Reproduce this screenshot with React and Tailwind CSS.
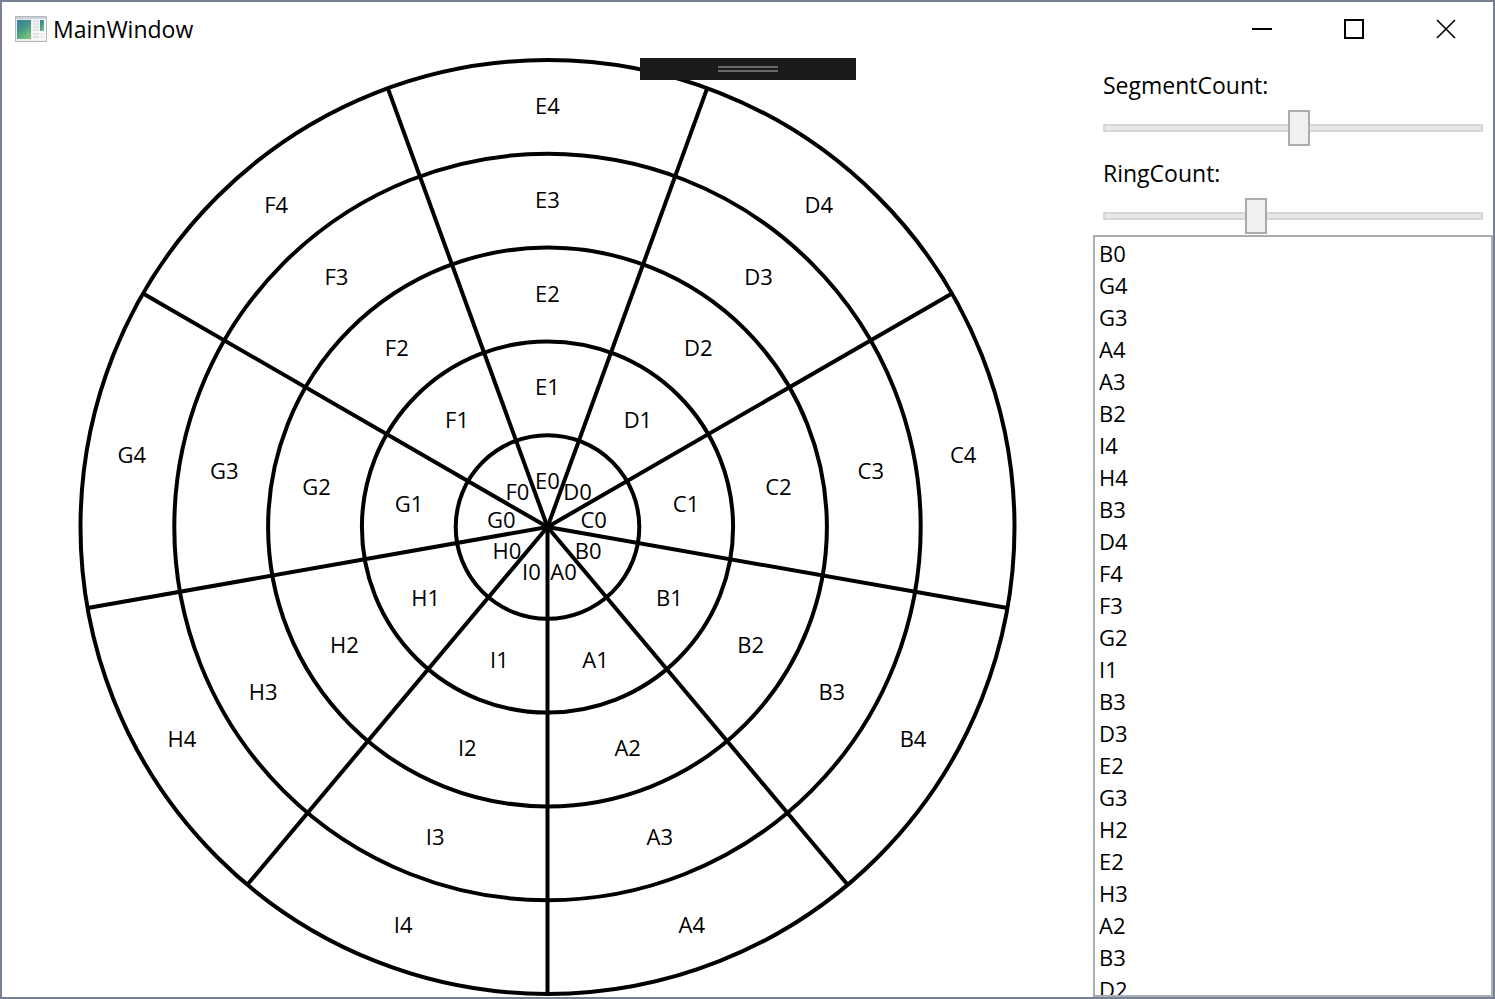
import { useState } from "react";

const CX = 470;
const CY = 469;
const OUTER = 467;
const INITIAL_HITS = [
  "B0", "G4", "G3", "A4", "A3", "B2", "I4", "H4", "B3", "D4", "F4", "F3",
  "G2", "I1", "B3", "D3", "E2", "G3", "H2", "E2", "H3", "A2", "B3", "D2",
];

function polar(radius, angle) {
  return [CX + radius * Math.sin(angle), CY + radius * Math.cos(angle)];
}

function Wheel({ segments, rings, onPick }) {
  const step = (OUTER + 2) / rings;
  const sweep = (2 * Math.PI) / segments;
  const radii = Array.from({ length: rings }, (_, r) => step * (r + 1) - 2);
  const spokes = Array.from({ length: segments }, (_, s) => s * sweep);

  function pick(event) {
    const box = event.currentTarget.getBoundingClientRect();
    const scale = Math.min(box.width, box.height) / (CX * 2);
    const dx = (event.clientX - box.left - box.width / 2) / scale;
    const dy = (event.clientY - box.top - box.height / 2) / scale;
    const ring = Math.floor(Math.hypot(dx, dy) / step);
    if (ring >= rings) return;
    const angle = (Math.atan2(dx, dy) + 2 * Math.PI) % (2 * Math.PI);
    onPick(String.fromCharCode(65 + Math.floor(angle / sweep)) + ring);
  }

  return (
    <svg
      viewBox="0 0 940 939"
      className="h-full w-full"
      role="img"
      aria-label="Segmented ring chart"
      onClick={pick}
    >
      <g fill="none" stroke="#000" strokeWidth="4">
        {radii.map((r) => (
          <circle key={r} cx={CX} cy={CY} r={r} />
        ))}
        {spokes.map((a) => {
          const [x, y] = polar(OUTER, a);
          return <line key={a} x1={CX} y1={CY} x2={x} y2={y} />;
        })}
      </g>
      <g fill="#000" fontSize="22" textAnchor="middle">
        {spokes.map((a, s) =>
          radii.map((_, r) => {
            const [x, y] = polar(step * (r + 0.5), a + sweep / 2);
            const name = String.fromCharCode(65 + s) + r;
            return (
              <text key={name} x={x} y={y + 9}>
                {name}
              </text>
            );
          }),
        )}
      </g>
    </svg>
  );
}

function AppIcon() {
  return (
    <svg width="32" height="26" viewBox="0 0 32 26" aria-hidden="true">
      <defs>
        <linearGradient id="pane" x1="0" y1="0" x2="0.6" y2="1">
          <stop offset="0" stopColor="#3d78b4" />
          <stop offset="0.45" stopColor="#3f9587" />
          <stop offset="1" stopColor="#74c07c" />
        </linearGradient>
      </defs>
      <rect x="0.5" y="0.5" width="31" height="25" fill="#ededf0" stroke="#b4b8be" />
      <rect x="1" y="1" width="30" height="2" fill="#c9d0d8" />
      <rect x="2" y="4" width="14" height="19" fill="url(#pane)" />
      <rect x="17" y="3" width="14" height="21" fill="#f8f8f8" />
      <path d="M18 5h6M18 8h6M18 11h6M18 14h6M18 18h6M18 21h6" stroke="#c9c9cc" />
      <rect x="25" y="4" width="4" height="11" fill="url(#pane)" />
      <path d="M25 18h4M25 21h4" stroke="#dededf" />
    </svg>
  );
}

function CaptionButton({ label, children }) {
  return (
    <button
      type="button"
      aria-label={label}
      className="flex w-[92px] items-center justify-center hover:bg-gray-200"
    >
      <svg width="20" height="20" viewBox="0 0 20 20" fill="none" stroke="#000" strokeWidth="2">
        {children}
      </svg>
    </button>
  );
}

function CountSlider({ id, label, min, max, value, onChange }) {
  return (
    <div className="flex flex-col gap-[9px] px-2.5 pt-[11px]">
      <label htmlFor={id} className="text-[23px] leading-8">
        {label}
      </label>
      <input
        id={id}
        type="range"
        min={min}
        max={max}
        step="0.01"
        value={value}
        onChange={(e) => onChange(Number(e.target.value))}
        className="h-9 w-full appearance-none bg-transparent [&::-webkit-slider-runnable-track]:h-2 [&::-webkit-slider-runnable-track]:border-2 [&::-webkit-slider-runnable-track]:border-[#d6d6d6] [&::-webkit-slider-runnable-track]:bg-[#e7eaea] [&::-webkit-slider-thumb]:-mx-0.5 [&::-webkit-slider-thumb]:-mt-4 [&::-webkit-slider-thumb]:h-9 [&::-webkit-slider-thumb]:w-[22px] [&::-webkit-slider-thumb]:appearance-none [&::-webkit-slider-thumb]:border-2 [&::-webkit-slider-thumb]:border-[#acacac] [&::-webkit-slider-thumb]:bg-[#f0f0f0]"
      />
    </div>
  );
}

export default function App() {
  const [segments, setSegments] = useState(8.83);
  const [rings, setRings] = useState(5);
  const [hits, setHits] = useState(INITIAL_HITS);

  return (
    <div className="flex h-screen flex-col overflow-hidden border-2 border-[#768294] bg-white font-['Open_Sans','Noto_Sans',sans-serif] text-[22px] text-black">
      <header className="flex h-14 shrink-0 pr-px pb-0.5">
        <div className="flex flex-1 items-center gap-1.5 pl-[13px]">
          <AppIcon />
          <h1 className="text-[23px]">MainWindow</h1>
        </div>
        <CaptionButton label="Minimize">
          <path d="M0 10h20" />
        </CaptionButton>
        <CaptionButton label="Maximize">
          <path d="M1 1h18v18H1z" />
        </CaptionButton>
        <CaptionButton label="Close">
          <path d="M1 1l18 18M19 1L1 19" strokeWidth="1.6" />
        </CaptionButton>
      </header>

      <main className="relative flex min-h-0 flex-1">
        <section className="min-w-0 flex-1">
          <Wheel
            segments={Math.round(segments)}
            rings={Math.round(rings)}
            onPick={(name) => setHits([...hits, name])}
          />
        </section>

        <aside className="flex w-[400px] shrink-0 flex-col">
          <CountSlider id="segments" label="SegmentCount:" min={1} max={16} value={segments} onChange={setSegments} />
          <CountSlider id="rings" label="RingCount:" min={1} max={11} value={rings} onChange={setRings} />
          <ul className="mt-px min-h-0 flex-1 overflow-hidden border-2 border-[#abadb3] px-1 leading-8">
            {hits.map((name, i) => (
              <li key={i}>{name}</li>
            ))}
          </ul>
        </aside>

        <div className="absolute inset-x-0 top-0 mx-auto flex h-[22px] w-[216px] flex-col items-center justify-center gap-0.5 bg-[#1b1b1b]">
          <span className="h-0.5 w-[60px] bg-[#6a6a6a]" />
          <span className="h-0.5 w-[60px] bg-[#6a6a6a]" />
        </div>
      </main>
    </div>
  );
}
